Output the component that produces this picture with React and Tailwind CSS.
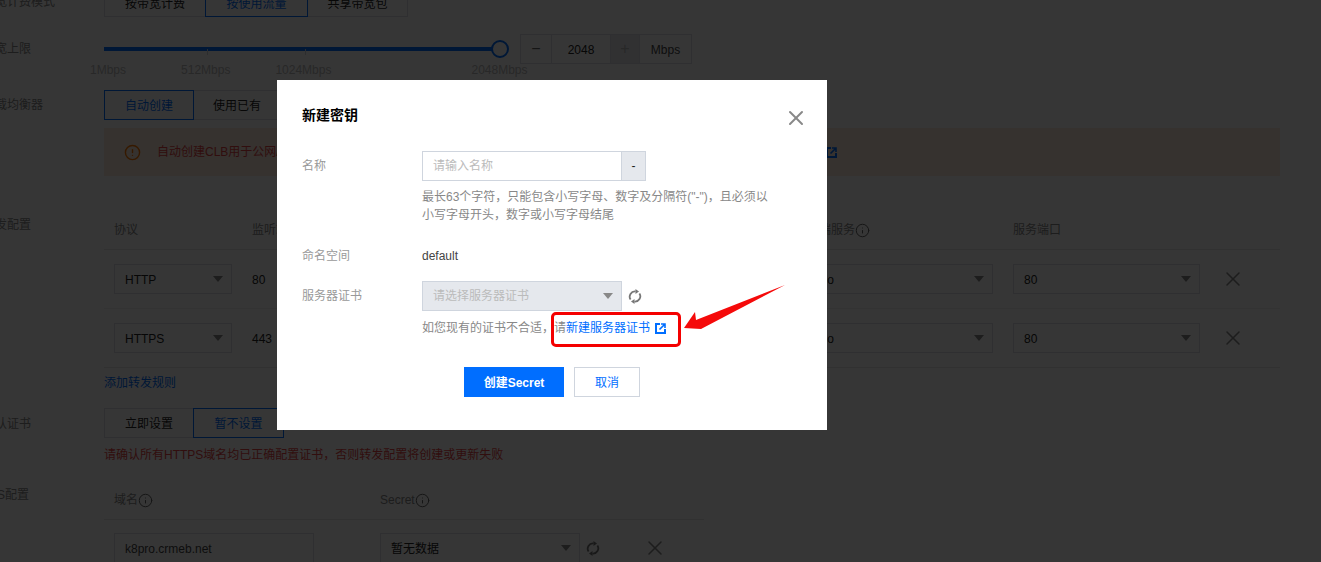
import React from "react";
import { X, Info, CircleAlert } from "lucide-react";

const Caret = ({ c = "#888" }) => (
  <svg width="10" height="6" viewBox="0 0 10 6" className="shrink-0"><path d="M0 0h10L5 6z" fill={c} /></svg>
);
const Ext = ({ c = "#006eff" }) => (
  <svg width="11" height="11" viewBox="0 0 11 11" fill="none" stroke={c} strokeWidth="2" className="shrink-0 block">
    <path d="M5 1H1v9h9V6" />
    <path d="M4.5 6.5L10 1M6 1H10V5" strokeWidth="1.6" />
  </svg>
);
const Sync = ({ className = "" }) => (
  <svg width="14" height="15" viewBox="0 0 14 15" className={`shrink-0 ${className}`} fill="none" stroke="#777" strokeWidth="1.8">
    <path d="M2.6 10.6A5.3 5.3 0 0 1 7.6 2.4" />
    <path d="M11.4 4.4A5.3 5.3 0 0 1 6.4 12.6" />
    <path d="M7.5 0L11 2.5L7.5 5Z" fill="#777" stroke="none" />
    <path d="M6.5 10L3 12.5L6.5 15Z" fill="#777" stroke="none" />
  </svg>
);
const Seg = ({ children, on, w, pad = "pt-px" }) => (
  <div className={`h-[30px] flex items-center justify-center border shrink-0 ${pad} ${w} ${on ? "border-[#006eff] text-[#006eff] relative" : "border-[#dcdfe6] text-[#222]"}`}>{children}</div>
);
const Row = ({ label, children, className = "", labelClass = "" }) => (
  <div className={`flex ${className}`}>
    <div className={`w-[121px] shrink-0 text-[#888] whitespace-nowrap ${labelClass}`}>{label}</div>
    <div className="flex-1 min-w-0">{children}</div>
  </div>
);
const Sel = ({ text, w, color = "text-[#222]" }) => (
  <div className={`h-[30px] border border-[#dcdfe6] flex items-center justify-between pl-[10px] pr-[8px] ${w} ${color}`}>
    <span className="pt-px">{text}</span><Caret />
  </div>
);
const Head = ({ children, info }) => (
  <span className="flex items-center pt-px text-[#888] whitespace-nowrap">{children}{info && <Info size={15} strokeWidth={1.6} className="text-[#666]" />}</span>
);
const TCell = ({ w, children }) => <div className={`${w} shrink-0 pl-[10px] flex items-center`}>{children}</div>;
const RuleRow = ({ proto, port, border }) => (
  <div className={`flex h-[59px] items-center border-b ${border}`}>
    <TCell w="w-[138px]"><Sel text={proto} w="w-[118px]" /></TCell>
    <TCell w="w-[541px]"><span className="pt-px text-[#222]">{port}</span></TCell>
    <TCell w="w-[220px]"><Sel text="demo" w="w-[200px]" /></TCell>
    <TCell w="w-[209px]"><Sel text="80" w="w-[187px]" /></TCell>
    <div className="pl-[9px]"><X size={24} strokeWidth={1.5} className="text-[#888]" /></div>
  </div>
);

function Background() {
  return (
    <div className="-mt-[13px] -ml-[17px] pr-[41px]">
      <Row label="带宽计费模式" labelClass="leading-[30px]">
        <div className="flex">
          <Seg pad="pt-[3px]" w="w-[102px]">按带宽计费</Seg>
          <Seg pad="pt-[3px]" on w="w-[103px] -ml-px">按使用流量</Seg>
          <Seg pad="pt-[3px]" w="w-[101px] -ml-px">共享带宽包</Seg>
        </div>
      </Row>
      <Row label="带宽上限" className="mt-[17px] h-[56px]" labelClass="leading-[30px]">
        <div className="flex">
          <div className="w-[416px] shrink-0">
            <div className="relative h-[30px] w-[404px]">
              <div className="absolute left-0 top-[13px] h-[4px] w-[388px] bg-[#006eff]" />
              <div className="absolute left-[103px] top-[15px] h-[6px] w-px bg-[#cfd5de]" />
              <div className="absolute left-[201px] top-[15px] h-[6px] w-px bg-[#cfd5de]" />
              <div className="absolute left-[387px] top-[6px] h-[18px] w-[18px] rounded-full border-2 border-[#006eff] bg-white" />
            </div>
            <div className="flex -ml-[14px] mt-[-3px] text-[#bbb] leading-[18px] whitespace-nowrap">
              <span>1Mbps</span>
              <span className="ml-[55px]">512Mbps</span>
              <span className="ml-[45px]">1024Mbps</span>
              <span className="ml-[140px]">2048Mbps</span>
            </div>
          </div>
          <div className="flex h-[30px] border border-[#dcdfe6] text-[#222] w-[172px]">
            <div className="w-[31px] flex items-center justify-center border-r border-[#dcdfe6] text-[#666] text-[16px]">−</div>
            <div className="w-[58px] flex items-center justify-center pt-px">2048</div>
            <div className="w-[30px] flex items-center justify-center border-x border-[#dcdfe6] bg-[#e5e8ed] text-[#bbb] text-[16px]">+</div>
            <div className="flex-1 flex items-center justify-center pt-px text-[#444]">Mbps</div>
          </div>
        </div>
      </Row>
      <Row label="负载均衡器" labelClass="leading-[30px]">
        <div className="flex">
          <Seg on w="w-[90px]">自动创建</Seg>
          <Seg w="w-[88px] -ml-px">使用已有</Seg>
        </div>
        <div className="mt-[8px] h-[48px] bg-[#fcebdd] flex items-center pl-[20px] text-[#e54545] whitespace-nowrap">
          <CircleAlert size={17} strokeWidth={2} className="text-[#ff7800] shrink-0" />
          <span className="ml-[16px] w-[669px] text-[#e54545]">自动创建CLB用于公网/内网访问Service，如需使用已有负载均衡器，请前往负载均衡控制台</span>
          <Ext />
        </div>
      </Row>
      <Row label="转发配置" className="mt-[34px]" labelClass="leading-[30px]">
        <div className="flex h-[40px] items-center border-b border-[#e5e5e5] mt-0">
          <TCell w="w-[138px]"><Head>协议</Head></TCell>
          <TCell w="w-[541px]"><Head>监听端口</Head></TCell>
          <TCell w="w-[220px]"><span className="ml-[14px]"><Head info>后端服务</Head></span></TCell>
          <TCell w="w-[209px]"><Head>服务端口</Head></TCell>
        </div>
        <RuleRow proto="HTTP" port="80" border="border-[#f0f0f0]" />
        <RuleRow proto="HTTPS" port="443" border="border-[#e5e5e5]" />
        <div className="mt-[6px] leading-[18px] text-[#006eff]">添加转发规则</div>
      </Row>
      <Row label="默认证书" className="mt-[16px]" labelClass="leading-[32px]">
        <div className="flex">
          <Seg w="w-[90px]">立即设置</Seg>
          <Seg on w="w-[91px] -ml-px">暂不设置</Seg>
        </div>
        <div className="mt-[8px] leading-[18px] text-[#e54545]">请确认所有HTTPS域名均已正确配置证书，否则转发配置将创建或更新失败</div>
      </Row>
      <Row label="TLS配置" className="mt-[16px]" labelClass="leading-[30px]">
        <div className="w-[600px] flex h-[40px] items-center border-b border-[#e5e5e5]">
          <TCell w="w-[266px]"><Head info>域名</Head></TCell>
          <TCell w="w-[300px]"><Head info>Secret</Head></TCell>
        </div>
        <div className="flex items-center mt-[13px] w-[600px]">
          <TCell w="w-[266px]"><div className="w-[200px] h-[30px] border border-[#dcdfe6] flex items-center pt-px pl-[10px] text-[#444]">k8pro.crmeb.net</div></TCell>
          <div className="pl-[10px] flex items-center">
            <Sel text="暂无数据" w="w-[200px]" />
            <Sync className="ml-[6px]" />
            <X size={24} strokeWidth={1.5} className="ml-[43px] text-[#888]" />
          </div>
        </div>
      </Row>
    </div>
  );
}

function Modal() {
  return (
    <div className="absolute left-[277px] top-[80px] w-[550px] h-[350px] bg-white pl-[25px] pt-[25px] text-[12px]">
      <div className="flex justify-between items-center h-[20px] pr-[19px]">
        <span className="text-[14px] font-bold text-black">新建密钥</span>
        <X size={24} strokeWidth={2} className="text-[#888] mt-[6px]" />
      </div>
      <div className="flex mt-[26px]">
        <div className="w-[120px] text-[#999] leading-[30px]">名称</div>
        <div className="flex h-[30px] w-[224px] border border-[#cfd5de]">
          <div className="flex-1 pl-[10px] flex items-center text-[#bbb]">请输入名称</div>
          <div className="w-[24px] bg-[#e5e8ed] border-l border-[#cfd5de] flex items-center justify-center text-[#222]">-</div>
        </div>
      </div>
      <div className="ml-[120px] mt-[7px] w-[350px] leading-[18px] text-[#888]">最长63个字符，只能包含小写字母、数字及分隔符("-")，且必须以小写字母开头，数字或小写字母结尾</div>
      <div className="flex mt-[23px] leading-[18px]">
        <div className="w-[120px] text-[#999]">命名空间</div>
        <div className="text-[#444]">default</div>
      </div>
      <div className="flex mt-[16px] items-center">
        <div className="w-[120px] text-[#999]">服务器证书</div>
        <div className="h-[30px] w-[200px] border border-[#cfd5de] bg-[#e5e8ed] flex items-center justify-between pl-[10px] pr-[8px] text-[#bbb]">
          <span>请选择服务器证书</span><Caret />
        </div>
        <Sync className="ml-[6px]" />
      </div>
      <div className="flex items-center ml-[120px] mt-[8px] leading-[18px] whitespace-nowrap text-[#888]">
        <span>如您现有的证书不合适，请</span>
        <span className="text-[#006eff]">新建服务器证书</span>
        <span className="ml-[5px]"><Ext /></span>
      </div>
      <div className="flex justify-center gap-[10px] mt-[30px] -ml-[25px]">
        <div className="w-[100px] h-[30px] pt-px bg-[#006eff] text-white font-bold flex items-center justify-center">创建Secret</div>
        <div className="w-[66px] h-[30px] pt-px border border-[#cfd5de] text-[#006eff] flex items-center justify-center">取消</div>
      </div>
      <div className="absolute left-[274px] top-[232px] w-[130px] h-[35px] border-[3px] border-[#f40000] rounded-[5px]" />
      <svg className="absolute left-[400px] top-[200px]" width="115" height="55" viewBox="0 0 115 55">
        <path d="M7 48L18 32L19 40L108 5L24 49Z" fill="#f50a0a" />
      </svg>
    </div>
  );
}

export default function App() {
  return (
    <div className="relative w-[1321px] h-[562px] overflow-hidden bg-white text-[12px] font-['Liberation_Sans','Noto_Sans_CJK_SC',sans-serif]">
      <Background />
      <div className="absolute inset-0 bg-black/[.79]" />
      <Modal />
    </div>
  );
}
